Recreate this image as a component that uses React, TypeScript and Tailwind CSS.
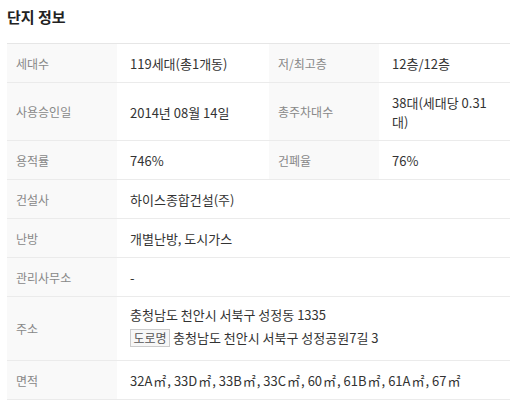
import React from 'react';

interface Cell {
  label: string;
  value: React.ReactNode;
}

const Label = ({ children }: { children: React.ReactNode }) => (
  <div className="flex w-[110px] shrink-0 items-center bg-[#f9f9f9] pl-[9px] text-[12px] text-[#888888]">
    {children}
  </div>
);

const Value = ({ children, w }: { children: React.ReactNode; w?: string }) => (
  <div
    className={`flex items-center pl-[13px] pr-[12px] pt-[10px] pb-[9px] text-[13px] text-[#333333] ${
      w ?? 'flex-1'
    }`}
  >
    <div>{children}</div>
  </div>
);

const PairRow = ({ a, b }: { a: Cell; b: Cell }) => (
  <div className="flex border-b border-[#ebebeb]">
    <Label>{a.label}</Label>
    <Value w="w-[152px] shrink-0">{a.value}</Value>
    <Label>{b.label}</Label>
    <Value>{b.value}</Value>
  </div>
);

const WideRow = ({ label, children }: { label: string; children: React.ReactNode }) => (
  <div className="flex border-b border-[#ebebeb]">
    <Label>{label}</Label>
    <Value>{children}</Value>
  </div>
);

const M2 = () => <span className="mx-[1px]">㎡</span>;

const areas = ['32A', '33D', '33B', '33C', '60', '61B', '61A', '67'];

export default function App() {
  return (
    <div
      className="h-[401px] w-[510px] overflow-hidden bg-white leading-[19px]"
      style={{ fontFamily: '"Noto Sans CJK KR", "Noto Sans", sans-serif' }}
    >
      <h2 className="pl-[7px] pt-[6px] text-[15px] font-bold leading-[22px] text-[#222222]">
        단지 정보
      </h2>
      <div className="ml-[7px] mt-[15px] w-[503px] border-t border-[#e6e6e6]">
        <PairRow
          a={{ label: '세대수', value: '119세대(총1개동)' }}
          b={{ label: '저/최고층', value: '12층/12층' }}
        />
        <PairRow
          a={{ label: '사용승인일', value: '2014년 08월 14일' }}
          b={{ label: '총주차대수', value: '38대(세대당 0.31 대)' }}
        />
        <PairRow
          a={{ label: '용적률', value: '746%' }}
          b={{ label: '건폐율', value: '76%' }}
        />
        <WideRow label="건설사">하이스종합건설(주)</WideRow>
        <WideRow label="난방">개별난방, 도시가스</WideRow>
        <WideRow label="관리사무소">-</WideRow>
        <div className="flex border-b border-[#ebebeb]">
          <Label>주소</Label>
          <div className="flex flex-1 flex-col gap-[4px] pl-[13px] pr-[12px] pt-[8px] pb-[13px] text-[13px] text-[#333333]">
            <span>충청남도 천안시 서북구 성정동 1335</span>
            <span className="flex h-[19px] items-center">
              <span className="mr-[3px] inline-flex h-[18px] w-[40px] items-center justify-center border border-[#cccccc] bg-[#f7f7f7] text-[12px] leading-none text-[#555555]">
                도로명
              </span>
              충청남도 천안시 서북구 성정공원7길 3
            </span>
          </div>
        </div>
        <WideRow label="면적">
          {areas.map((a, i) => (
            <React.Fragment key={a}>
              {a}
              <M2 />
              {i < areas.length - 1 ? ', ' : ''}
            </React.Fragment>
          ))}
        </WideRow>
      </div>
    </div>
  );
}
